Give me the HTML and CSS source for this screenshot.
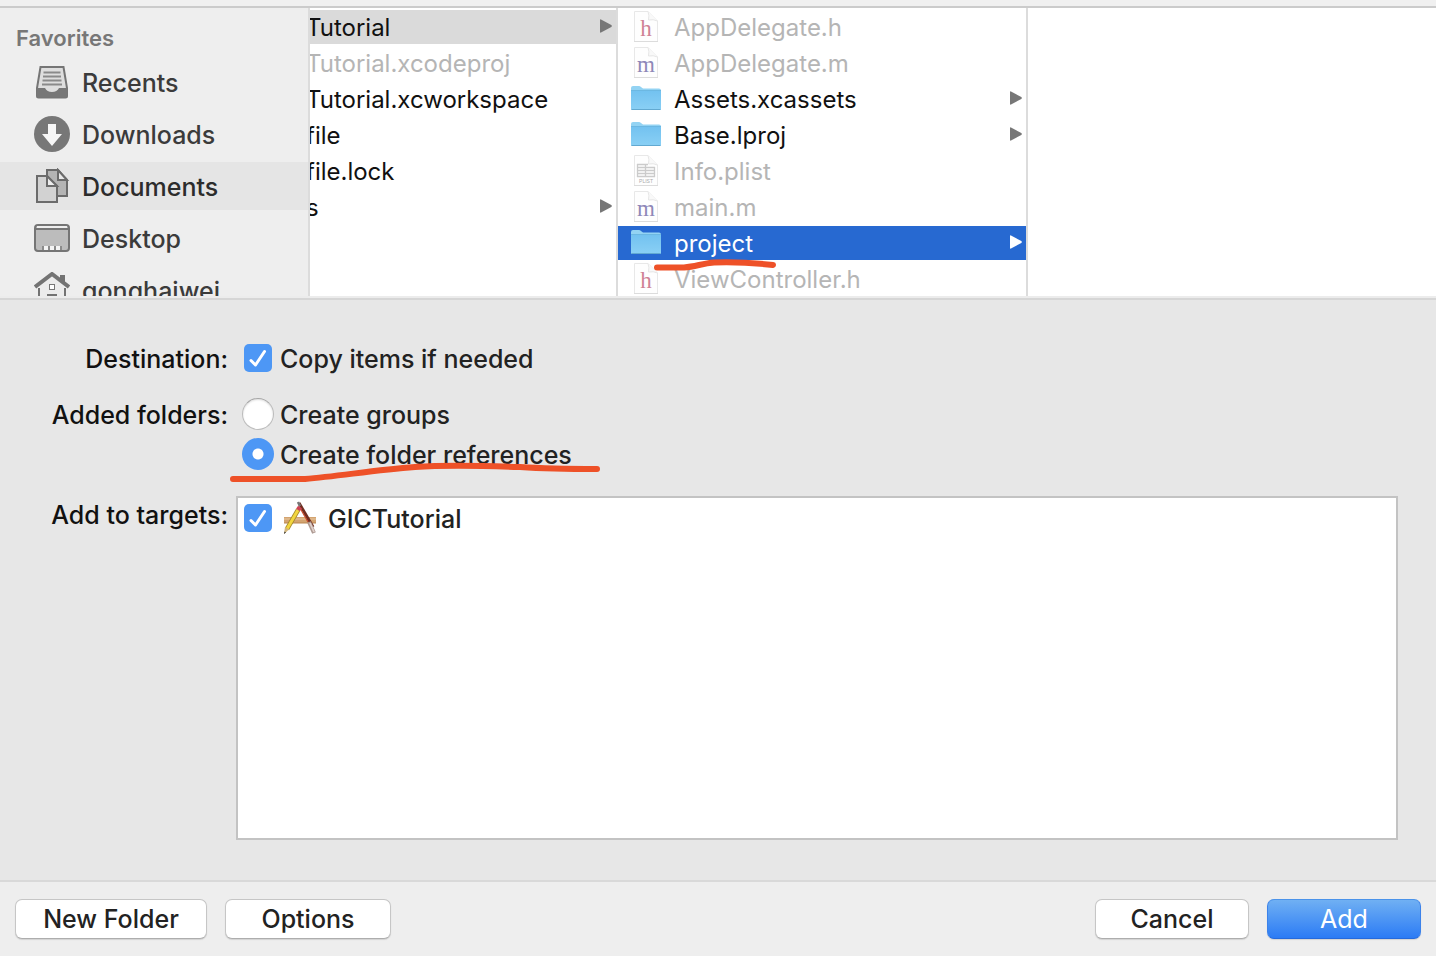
FILE: index.html
```html
<!DOCTYPE html>
<html lang="en">
<head>
<meta charset="utf-8">
<title>Add Files</title>
<link rel="stylesheet" href="styles.css">
</head>
<body>
<svg class="defs" aria-hidden="true">
  <defs>
    <linearGradient id="folder-fill" x1="0" y1="0" x2="0" y2="1">
      <stop offset="0" stop-color="#73c2f0"/><stop offset="1" stop-color="#8ad0f5"/>
    </linearGradient>
    <symbol id="folder" viewBox="0 0 32 28">
      <path d="M1 3q0-2 2-2h6q1 0 2 1l2 1.500h16q2 0 2 2V24H1z" fill="#93d3f3"/>
      <path d="M1 6h30v18q0 1-1 1H2q-1 0-1-1z" fill="url(#folder-fill)"/>
      <path d="M1 5.500h30" stroke="#6cb8e2" stroke-width="1"/>
      <path d="M1.500 24.500h29" stroke="#62a9d1" stroke-width="1"/>
    </symbol>
    <symbol id="page" viewBox="0 0 32 32">
      <path d="M4.500 .5H18L27.500 10v20.500h-23z" fill="#fefefe" stroke="#e8e8e8" stroke-width="1"/>
      <path d="M18 .5q1.500 4 .5 8.500 5-1 9 1" fill="#f9f9f9" stroke="#e6e6e6" stroke-width="1"/>
      <path d="M4 30.500h24" stroke="#dcdcdc" stroke-width="1"/>
    </symbol>
    <symbol id="arrow" viewBox="0 0 12 14">
      <path d="M0 1q0-1 1-.6l10.300 5.700q1 .9 0 1.800L1 13.600q-1 .4-1-.6z" fill="currentColor"/>
    </symbol>
  </defs>
</svg>

<div class="toolbar-edge"></div>
<main class="browser">
  <nav class="sidebar">
    <h2 class="sidebar-title">Favorites</h2>
    <a class="place" href="#recents">
      <svg class="place-icon" viewBox="0 0 36 36"><path d="M6.500 3h23L33 24v8q0 1.500-1.500 1.500h-27Q3 33.500 3 32v-8z" fill="#dedede"/><path d="M6.500 3h23L33 24v8q0 1.500-1.500 1.500h-27Q3 33.500 3 32v-8z" fill="none" stroke="#757575" stroke-width="2"/><path d="M9.500 8.500h17M9 12.500h18M8.500 16.500h19M8 20.500h20" stroke="#8a8a8a" stroke-width="1.800"/><path d="M3 24h8q2 4 7 4t7-4h8v8q0 1.500-1.500 1.500h-27Q3 33.500 3 32z" fill="#777"/></svg>
      <span>Recents</span></a>
    <a class="place" href="#downloads">
      <svg class="place-icon" viewBox="0 0 36 36"><circle cx="18" cy="18" r="18" fill="#777"/><path d="M14 8h8v10h6L18 30 8 18h6z" fill="#f6f6f6"/></svg>
      <span>Downloads</span></a>
    <a class="place place-current" href="#documents">
      <svg class="place-icon" viewBox="0 0 36 36"><g stroke="#6b6b6b" stroke-width="2" stroke-linejoin="miter"><path d="M13 2h11l9 10v16H13z" fill="#b4b4b4"/><path d="M24 2v10h9z" fill="#e8e8e8"/><path d="M3 8h10l10 10v16H3z" fill="#d2d2d2"/><path d="M13 8v10h10z" fill="#ececec"/></g></svg>
      <span>Documents</span></a>
    <a class="place" href="#desktop">
      <svg class="place-icon" viewBox="0 0 36 36"><rect x="1" y="5" width="34" height="26" rx="3" fill="#bcbcbc" stroke="#757575" stroke-width="2"/><path d="M3 7h30" stroke="#eee" stroke-width="2"/><path d="M2 9h32" stroke="#757575" stroke-width="2"/><path d="M8 26h20v4H8z" fill="#8b8b8b"/><path d="M10 26h4v4h-4zM16 26h4v4h-4zM22 26h4v4h-4z" fill="#f4f4f4"/></svg>
      <span>Desktop</span></a>
    <a class="place" href="#home">
      <svg class="place-icon" viewBox="0 0 36 36"><path d="M5 15v17h26V15L18 4z" fill="#ececec"/><path d="M5 16v18h26V16" fill="none" stroke="#737373" stroke-width="2"/><path d="M26 3h5v10l-5-5z" fill="#737373"/><path d="M1 15 18 2l17 13" fill="none" stroke="#737373" stroke-width="4"/><rect x="15.500" y="12.500" width="5" height="5" fill="#fff" stroke="#777"/><path d="M14 34V23h8v11" fill="none" stroke="#737373" stroke-width="2"/></svg>
      <span>gonghaiwei</span></a>
  </nav>

  <section class="column column-parent">
    <div class="file file-open"><span>Tutorial</span><svg class="arrow"><use href="#arrow"/></svg></div>
    <div class="file file-off"><span>Tutorial.xcodeproj</span></div>
    <div class="file"><span>Tutorial.xcworkspace</span></div>
    <div class="file"><span>file</span></div>
    <div class="file"><span>file.lock</span></div>
    <div class="file"><span>s</span><svg class="arrow"><use href="#arrow"/></svg></div>
  </section>

  <section class="column column-files">
    <div class="file file-off"><svg class="file-icon" viewBox="0 0 32 32"><use href="#page"/><text class="glyph glyph-h" x="16" y="25">h</text></svg><span>AppDelegate.h</span></div>
    <div class="file file-off"><svg class="file-icon" viewBox="0 0 32 32"><use href="#page"/><text class="glyph glyph-m" x="16" y="25">m</text></svg><span>AppDelegate.m</span></div>
    <div class="file"><svg class="folder-icon"><use href="#folder"/></svg><span>Assets.xcassets</span><svg class="arrow"><use href="#arrow"/></svg></div>
    <div class="file"><svg class="folder-icon"><use href="#folder"/></svg><span>Base.lproj</span><svg class="arrow"><use href="#arrow"/></svg></div>
    <div class="file file-off"><svg class="file-icon" viewBox="0 0 32 32"><use href="#page"/><path d="M7 9.500h11M7 12.500h18M7 15.500h18M7 18.500h18M7 21.500h18M7.500 9v13M15.500 9v13M24.500 12v10" stroke="#cbcbcb" stroke-width="1.300"/><text class="glyph glyph-plist" x="16" y="28">PLIST</text></svg><span>Info.plist</span></div>
    <div class="file file-off"><svg class="file-icon" viewBox="0 0 32 32"><use href="#page"/><text class="glyph glyph-m" x="16" y="25">m</text></svg><span>main.m</span></div>
    <div class="file file-selected"><svg class="folder-icon"><use href="#folder"/></svg><span>project</span><svg class="arrow"><use href="#arrow"/></svg></div>
    <div class="file file-off"><svg class="file-icon" viewBox="0 0 32 32"><use href="#page"/><text class="glyph glyph-h" x="16" y="25">h</text></svg><span>ViewController.h</span></div>
    <svg class="mark mark-project" viewBox="0 0 124 12"><path d="M4 7.500h27c12-1 18-4 30-5q28-1 59 2.500"/></svg>
  </section>
  <section class="column column-preview"></section>
</main>

<form class="options" id="options">
  <div class="row-label">Destination:</div>
  <div class="choices"><label class="choice choice-check"><input class="check" type="checkbox" checked><span>Copy items if needed</span></label></div>
  <div class="row-label">Added folders:</div>
  <div class="choices">
    <label class="choice"><input class="radio" type="radio" name="folders"><span>Create groups</span></label>
    <label class="choice"><input class="radio" type="radio" name="folders" checked><span>Create folder references</span></label>
    <svg class="mark mark-references" viewBox="0 0 372 20"><path d="M4 16h72c35-3 70-9 110-12 30-2 75-1 105 0 30 2 47 2 77 2"/></svg>
  </div>
  <div class="row-label row-label-targets">Add to targets:</div>
  <div class="targets">
    <label class="choice target"><input class="check" type="checkbox" checked>
      <svg class="app-icon" viewBox="0 0 34 34"><path d="M1 16h32v6H1z" fill="#d3a471"/><path d="M1 18h32" stroke="#e2bd91" stroke-width="1.500"/><path d="M1 22h32" stroke="#b98651"/><path d="M16 2l14 24" stroke="#702d20" stroke-width="3"/><path d="M15 1l2 4" stroke="#777" stroke-width="2.500"/><path d="M17 7l8 14" stroke="#c84c2c" stroke-width="1.200"/><path d="M26 21l5 11" stroke="#ad9a93" stroke-width="4"/><path d="M27 22l4 9" stroke="#e0d0ca" stroke-width="1.800"/><path d="M15 9 4 28" stroke="#a58a2c" stroke-width="4.600"/><path d="M15 9 4 28" stroke="#f3d63e" stroke-width="3"/><path d="M17 6l-2 3" stroke="#cf4354" stroke-width="4.600"/><path d="M2 26l4 2.500L1 33z" fill="#d2b67c"/><path d="M1.500 30.500l1.500 1L1 33z" fill="#333"/></svg>
      <span>GICTutorial</span></label>
  </div>
</form>

<footer class="footer">
  <button class="button button-folder" type="button">New Folder</button>
  <button class="button button-options" type="button">Options</button>
  <button class="button button-cancel" type="button">Cancel</button>
  <button class="button button-add" type="submit" form="options">Add</button>
</footer>
</body>
</html>
```
FILE: styles.css
```css
* { box-sizing: border-box; }
body {
  margin: 0;
  min-height: 100vh;
  display: flex;
  flex-direction: column;
  background: #e7e7e7;
  color: #222;
  font-family: Inter, Roboto, "Liberation Sans", sans-serif;
  font-size: 25px;
  font-weight: 450;
  line-height: 32px;
}
.defs { position: absolute; width: 0; height: 0; }
.toolbar-edge { height: 8px; background: #f0f0f0; border-bottom: 2px solid #cbcbcb; }

.browser {
  display: flex;
  height: 292px;
  flex: none;
  border-bottom: 2px solid #d6d6d6;
  padding-bottom: 2px;
  background: #ececec;
}
.sidebar {
  width: 308px;
  flex: none;
  display: flex;
  flex-direction: column;
  gap: 4px;
  padding-top: 14px;
  background: #eee;
  overflow: hidden;
}
.sidebar-title { margin: 0; padding-left: 16px; font-size: 22px; line-height: 32px; font-weight: 600; color: #777; }
.place { display: flex; flex: none; align-items: center; gap: 12px; height: 48px; padding-left: 34px; color: #3b3b3b; text-decoration: none; }
.place span, .file span, .choice span { padding-top: 2px; }
.place-current { background: #e5e5e5; color: #2c2c2c; font-weight: 500; }
.place-icon { width: 36px; height: 36px; }

.column {
  display: flex;
  flex-direction: column;
  flex: none;
  gap: 2px;
  padding-top: 2px;
  background: #fff;
  border-left: 2px solid #dcdcdc;
  overflow: hidden;
  font-size: 24px;
  font-weight: 400;
}
.column-parent { width: 308px; }
.column-files { width: 410px; position: relative; }
.column-preview { flex: 1; }
.file { display: flex; flex: none; align-items: center; height: 34px; padding-right: 4px; white-space: nowrap; color: #111; }
.column-parent .file { text-indent: -4px; }
.column-files .file { gap: 12px; padding-left: 12px; }
.column .file-off { color: #b5b5b5; }
.file-open { background: #dadada; }
.column .file-selected { background: #2769d1; color: #fff; }
.file-icon, .folder-icon { width: 32px; height: 32px; flex: none; }
.folder-icon { height: 28px; }
.arrow { width: 12px; height: 14px; margin-left: auto; margin-bottom: 2px; color: #777; }
.file-selected .arrow { color: #fff; }
.glyph { text-anchor: middle; font-family: "Liberation Serif", serif; font-size: 23px; font-weight: 400; }
.glyph-h { fill: #cf8295; }
.glyph-m { fill: #8e88b8; }
.glyph-plist { font-family: "Liberation Sans", sans-serif; font-size: 5px; fill: #aaa; }

.mark { position: absolute; pointer-events: none; overflow: visible; fill: none; stroke: #ee5128; stroke-width: 6px; stroke-linecap: round; stroke-linejoin: round; }
.mark-project { left: 35px; top: 252px; width: 124px; height: 12px; }
.mark-references { left: -7px; top: 65px; width: 372px; height: 20px; }

.options {
  flex: 1;
  display: grid;
  grid-template-columns: 228px 1fr;
  grid-template-rows: auto auto 1fr;
  column-gap: 8px;
  padding: 42px 38px 40px 0;
}
.row-label { text-align: right; color: #111; padding-top: 1px; font-weight: 500; }
.row-label-targets { padding-top: 5px; }
.choices { position: relative; display: flex; flex-direction: column; align-items: flex-start; gap: 8px; padding-left: 6px; margin-bottom: 24px; }
.choice { display: flex; align-items: center; gap: 6px; height: 32px; font-weight: 500; }
.choice-check { gap: 8px; padding-left: 2px; }
.check, .radio { appearance: none; flex: none; margin: 0; }
.check { width: 28px; height: 28px; border-radius: 5px; background: #fff; }
.check:checked {
  background: #4d97f5 url("data:image/svg+xml,%3Csvg xmlns='http://www.w3.org/2000/svg' viewBox='0 0 28 28'%3E%3Cpath d='M7 16.500l4.500 4.500L20.500 7.500' fill='none' stroke='white' stroke-width='3' stroke-linecap='round' stroke-linejoin='round'/%3E%3C/svg%3E") center / 28px 28px;
}
.radio { width: 32px; height: 32px; border-radius: 50%; background: #fff; border: 1px solid #bcbcbc; border-top-color: #a5a5a5; box-shadow: inset 0 1px 2px #ddd; }
.radio:checked { border: 0; box-shadow: none; background: radial-gradient(circle, #fff 5px, #4d97f5 6px); }
.targets { min-height: 120px; margin-top: 2px; padding: 4px 6px; border: 2px solid #c3c3c3; background: #fff; }
.target { gap: 11px; font-weight: 450; }
.app-icon { width: 34px; height: 34px; flex: none; }

.footer { display: flex; align-items: center; gap: 18px; height: 76px; padding: 0 15px; background: #eee; border-top: 2px solid #d9d9d9; }
.button { height: 40px; padding: 0; border: 1px solid #c6c6c6; border-bottom-color: #adadad; border-radius: 7px; background: #fff; box-shadow: 0 1px 1px #d2d2d2; color: #222; font: inherit; }
.button-folder { width: 192px; }
.button-options { width: 166px; }
.button-cancel { width: 154px; margin-left: auto; }
.button-add { width: 154px; border-color: #4b93ea #3c82ea #256adc; background: linear-gradient(#70b0f3, #2b7bf5); color: #fff; font-weight: 400; }
```
